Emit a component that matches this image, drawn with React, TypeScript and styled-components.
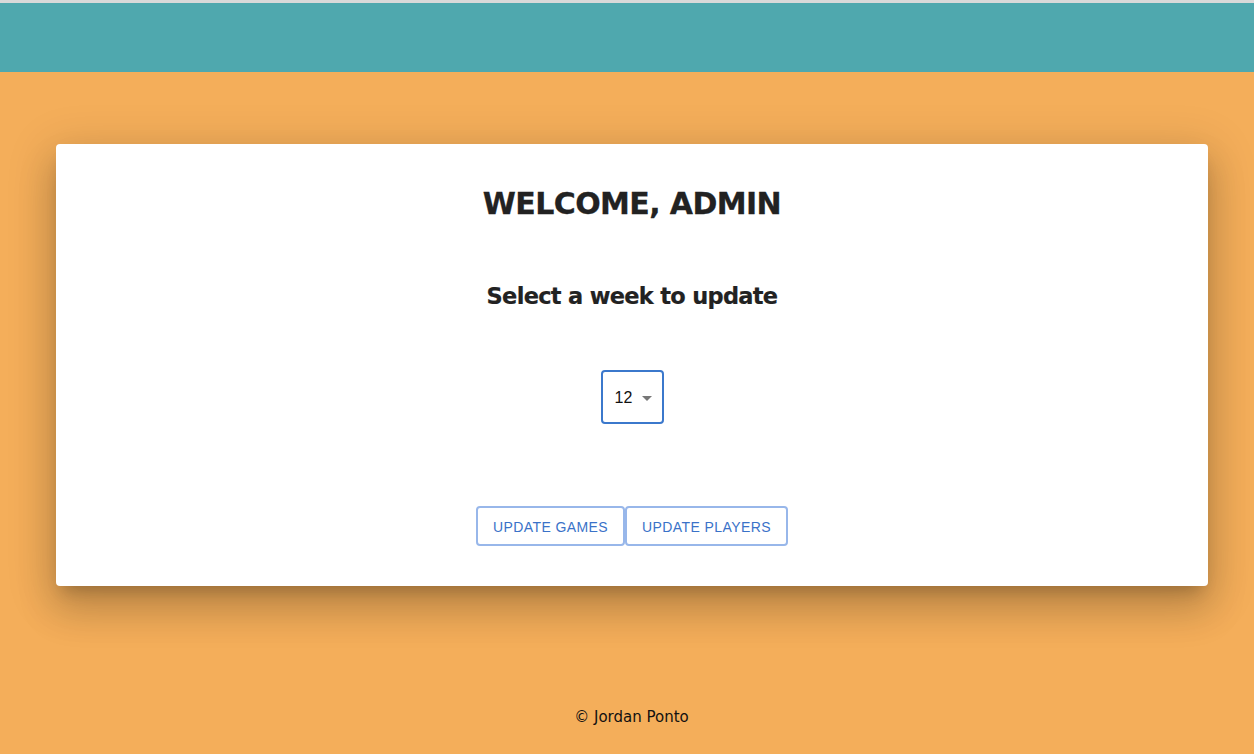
import { createGlobalStyle } from 'styled-components'
import styled from 'styled-components'

const GlobalStyle = createGlobalStyle`
  html, body {
    margin: 0;
    padding: 0;
    height: 100%;
  }
  body {
    background: #f4ae5a;
    font-family: 'DejaVu Sans', Verdana, sans-serif;
  }
`

const App = () => {
  return (
    <Page>
      <GlobalStyle />
      <TopLine />
      <Header />
      <Main>
        <Card>
          <Title>WELCOME, ADMIN</Title>
          <Subtitle>Select a week to update</Subtitle>
          <WeekSelect>
            <SelectValue>12</SelectValue>
            <Caret viewBox="0 0 10 5">
              <path d="M0 0 L5 5 L10 0 Z" />
            </Caret>
          </WeekSelect>
          <ButtonRow>
            <OutlineButton type="button">Update Games</OutlineButton>
            <OutlineButton type="button">Update Players</OutlineButton>
          </ButtonRow>
        </Card>
      </Main>
      <Footer>© Jordan Ponto</Footer>
    </Page>
  )
}

const Page = styled.div`
  display: flex;
  flex-direction: column;
  min-height: 754px;
  background: #f4ae5a;
`

const TopLine = styled.div`
  height: 3px;
  background: #d9d9d9;
`

const Header = styled.header`
  height: 69px;
  background: #4fa8ae;
`

const Main = styled.main`
  display: flex;
  justify-content: center;
  padding: 72px 46px 0 56px;
`

const Card = styled.section`
  display: flex;
  flex-direction: column;
  align-items: center;
  width: 1152px;
  height: 442px;
  box-sizing: border-box;
  padding-top: 40px;
  background: #fff;
  border-radius: 4px;
  box-shadow:
    0 11px 15px -7px rgba(0, 0, 0, 0.2),
    0 24px 38px 3px rgba(0, 0, 0, 0.14),
    0 9px 46px 8px rgba(0, 0, 0, 0.12);
`

const Title = styled.h1`
  margin: 0;
  color: #222;
  font-family: Tahoma, 'DejaVu Sans', sans-serif;
  font-size: 30px;
  font-weight: 700;
  line-height: 40px;
  letter-spacing: -0.6px;
  -webkit-text-stroke: 0.3px #222;
`

const Subtitle = styled.h2`
  margin: 57px 0 0;
  color: #222;
  font-family: Tahoma, 'DejaVu Sans', sans-serif;
  font-size: 22.5px;
  font-weight: 700;
  line-height: 30px;
  letter-spacing: -0.7px;
  -webkit-text-stroke: 0.2px #222;
`

const WeekSelect = styled.div`
  display: flex;
  align-items: center;
  gap: 10px;
  margin-top: 59px;
  width: 63px;
  height: 54px;
  box-sizing: border-box;
  padding: 2px 0 0 12px;
  border: 2px solid #3b78cc;
  border-radius: 4px;
`

const SelectValue = styled.span`
  color: #111;
  font-family: 'Liberation Sans', Arial, sans-serif;
  font-size: 16px;
`

const Caret = styled.svg`
  width: 10px;
  height: 5px;
  fill: #777;
`

const ButtonRow = styled.div`
  display: flex;
  margin-top: 82px;
`

const OutlineButton = styled.button`
  height: 40px;
  padding: 2px 15px 0;
  background: #fff;
  border: 2px solid #98b7ea;
  border-radius: 4px;
  color: #3a72c8;
  font-family: 'Liberation Sans', Arial, sans-serif;
  font-size: 14px;
  text-transform: uppercase;
  letter-spacing: 0.4px;
  cursor: pointer;
`

const Footer = styled.footer`
  margin-top: 121px;
  padding-left: 9px;
  text-align: center;
  color: #111;
  font-family: Tahoma, 'DejaVu Sans', sans-serif;
  font-size: 15px;
  line-height: 20px;
`

export default App
